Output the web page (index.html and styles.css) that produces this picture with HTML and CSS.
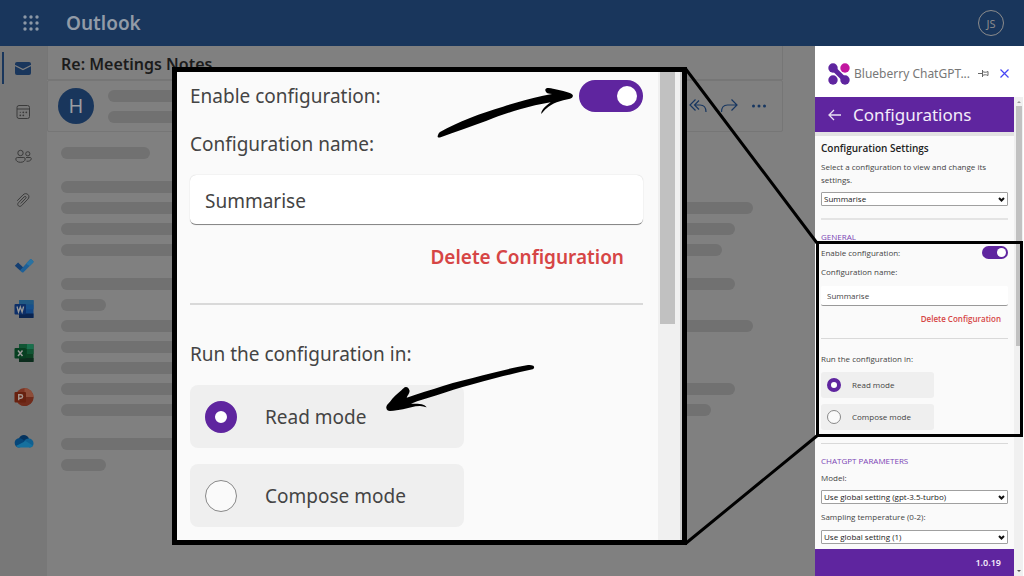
FILE: index.html
```html
<!DOCTYPE html>
<html lang="en">
<head>
<meta charset="utf-8">
<meta name="viewport" content="width=device-width, initial-scale=1">
<title>Outlook – Blueberry ChatGPT configurations</title>
<link rel="stylesheet" href="styles.css">
</head>
<body>
<div class="stage">
  <header class="topbar">
    <button class="icon-button" type="button" aria-label="App launcher">
      <svg width="18" height="18" viewBox="0 0 18 18" fill="#8d98a6"><circle cx="3" cy="3" r="1.7"/><circle cx="9" cy="3" r="1.7"/><circle cx="15" cy="3" r="1.7"/><circle cx="3" cy="9" r="1.7"/><circle cx="9" cy="9" r="1.7"/><circle cx="15" cy="9" r="1.7"/><circle cx="3" cy="15" r="1.7"/><circle cx="9" cy="15" r="1.7"/><circle cx="15" cy="15" r="1.7"/></svg>
    </button>
    <span class="brand">Outlook</span>
    <button class="account" type="button" aria-label="Account">JS</button>
  </header>

  <div class="workspace">
    <nav class="rail" aria-label="Apps">
      <a class="rail-item active" href="#" aria-label="Mail">
        <svg width="20" height="20" viewBox="0 0 20 20"><rect x="2" y="4" width="16" height="13" rx="2" fill="#19365c"/><path d="M2 7.500l8 4 8-4" fill="none" stroke="#808080" stroke-width="1.300"/></svg>
      </a>
      <a class="rail-item" href="#" aria-label="Calendar">
        <svg width="20" height="20" viewBox="0 0 20 20" fill="none" stroke="#3b3b3b" stroke-width="1"><rect x="4" y="3.500" width="12.500" height="13" rx="2"/><path d="M4 7h12.500"/><g fill="#3b3b3b" stroke="none"><circle cx="10.300" cy="10.300" r=".9"/><circle cx="13.300" cy="10.300" r=".9"/><circle cx="7.300" cy="13.300" r=".9"/><circle cx="10.300" cy="13.300" r=".9"/><circle cx="7.300" cy="10.300" r=".6"/></g></svg>
      </a>
      <a class="rail-item" href="#" aria-label="People">
        <svg width="20" height="20" viewBox="0 0 20 20" fill="none" stroke="#3b3b3b" stroke-width="1"><circle cx="7.500" cy="7" r="2.700"/><circle cx="14.800" cy="7.800" r="2.100"/><path d="M4.300 11.500h6.500c.8 0 1.400.6 1.400 1.400 0 2-1.900 3.400-4.700 3.400s-4.700-1.400-4.700-3.400c0-.8.700-1.400 1.500-1.400zM13 11.500h4c.8 0 1.400.5 1.300 1.300-.2 1.700-2.200 2.800-4.800 2.400"/></svg>
      </a>
      <a class="rail-item" href="#" aria-label="Files">
        <svg width="20" height="20" viewBox="0 0 20 20" fill="none" stroke="#3b3b3b" stroke-width="1" stroke-linecap="round"><path d="M4.500 10.500l5.500-5.600c1.700-1.700 3.500-1.500 4.800-.5 1.600 1.400 1.400 3.400 0 4.800l-6.200 6.400c-1 1-2.300 1-3.200.2s-.9-2.100 0-3l5.800-6c.5-.5 1.100-.5 1.600-.1s.4 1.100 0 1.500L8 13.200"/></svg>
      </a>
      <a class="rail-item app todo" href="#" aria-label="To Do">
        <svg width="20" height="20" viewBox="0 0 20 20"><path d="M.8 10.700l3.300-3.300 5.200 5.200-3 3.200z" fill="#133e72"/><path d="M5.900 15.400L16 4.400c.5-.5 1-.5 1.500 0l1.700 1.700c.5.500.5 1 0 1.500L9.500 17.200c-.5.500-1.100.5-1.600 0z" fill="#1e6097"/><path d="M12 8.800l4-4.400c.5-.5 1-.5 1.500 0l1.700 1.700c.5.500.5 1 0 1.500l-3.500 3.500z" fill="#2a73a2"/></svg>
      </a>
      <a class="rail-item app" href="#" aria-label="Word">
        <svg width="20" height="20" viewBox="0 0 20 20"><rect x="5" y="1" width="14.500" height="18" rx="1" fill="#134785"/><path d="M5 1h14.500v4.800H5z" fill="#205983"/><path d="M5 5.800h14.500v4.500H5z" fill="#15508c"/><path d="M5 14.500h14.500V19H5z" fill="#0a2450"/><rect x=".5" y="5" width="11.500" height="10.500" rx="1" fill="#0d2f68"/><path d="M3 7.500l1.500 5.500 1.800-5 1.800 5 1.500-5.500" fill="none" stroke="#999" stroke-width="1.300"/></svg>
      </a>
      <a class="rail-item app" href="#" aria-label="Excel">
        <svg width="20" height="20" viewBox="0 0 20 20"><rect x="5" y="1" width="14.500" height="18" rx="1" fill="#0b4122"/><path d="M5 1h8v5H5zM13 6h6.500v5H13z" fill="#115534"/><path d="M13 1h6.500v5H13z" fill="#1a704d"/><path d="M5 15h14.500v4H5z" fill="#0c2c1d"/><rect x=".5" y="5" width="11.500" height="10.500" rx="1" fill="#073f21"/><path d="M4 7.500l4.500 5.500M8.500 7.500L4 13" stroke="#999" stroke-width="1.500"/></svg>
      </a>
      <a class="rail-item app" href="#" aria-label="PowerPoint">
        <svg width="20" height="20" viewBox="0 0 20 20"><circle cx="10.500" cy="10" r="9" fill="#7d3423"/><path d="M10.500 1a9 9 0 0 1 9 9h-9z" fill="#8d4d39"/><path d="M4.500 16.700a9 9 0 0 0 15-6.700h-9z" fill="#702b1b"/><rect x=".5" y="5" width="11.500" height="10.500" rx="1" fill="#68210f"/><path d="M4.700 13.300V7.700h2.100c2.400 0 2.400 3.500 0 3.500H4.700" fill="none" stroke="#a4968f" stroke-width="1.400"/></svg>
      </a>
      <a class="rail-item app" href="#" aria-label="OneDrive">
        <svg width="20" height="20" viewBox="0 0 20 20"><path d="M4.800 8C6 3.200 13 2.500 15 7.700L9 13z" fill="#04335f"/><path d="M.7 12c0-5 5.700-6 8.300-3.200l6 4.700-10 3C2.500 16.500.7 14.500.7 12z" fill="#064679"/><path d="M9.800 10.500c2.200-4.300 9.500-4 9.700 2 0 2.500-1.700 4-4 4z" fill="#106091"/><path d="M2 15l9.500-5 7.500 4.500c-.8 1.300-2 2-3.700 2H5c-1.200 0-2.300-.7-3-1.500z" fill="#15709e"/></svg>
      </a>
    </nav>

    <main class="mail">
      <h1 class="subject">Re: Meetings Notes</h1>
      <section class="message-head">
        <span class="avatar">H</span>
        <div class="sender">
          <span class="bar bar-sender"></span>
          <span class="bar bar-sender"></span>
        </div>
        <div class="actions">
          <button class="icon-button" type="button" aria-label="Reply all"><svg width="18" height="16" viewBox="0 0 18 16" fill="none" stroke="#173660" stroke-width="1.200"><path d="M6.500 1.500L1 7l5.500 5.500M10 2.500L5.500 7l4.500 4.500M5.500 7H11c4 0 6 2.500 6 7"/></svg></button>
          <button class="icon-button" type="button" aria-label="Forward"><svg width="18" height="16" viewBox="0 0 18 16" fill="none" stroke="#173660" stroke-width="1.200"><path d="M11.500 1.500L17 7l-5.500 5.500M17 7H7.500C3.500 7 1.500 9.500 1.500 14"/></svg></button>
          <button class="icon-button" type="button" aria-label="More actions"><svg width="16" height="16" viewBox="0 0 16 16" fill="#173660"><circle cx="2.500" cy="8" r="1.500"/><circle cx="8" cy="8" r="1.500"/><circle cx="13.500" cy="8" r="1.500"/></svg></button>
        </div>
      </section>
      <section class="message-body">
        <div class="lines"><span class="bar bar-greeting"></span></div>
        <div class="lines">
          <span class="bar bar-short"></span><span class="bar bar-full"></span><span class="bar bar-long"></span><span class="bar bar-mid"></span>
        </div>
        <div class="lines">
          <span class="bar bar-long"></span><span class="bar bar-stub"></span><span class="bar bar-full"></span><span class="bar bar-short"></span><span class="bar bar-short"></span><span class="bar bar-long"></span><span class="bar bar-end"></span>
        </div>
        <div class="lines"><span class="bar bar-short"></span><span class="bar bar-stub"></span></div>
      </section>
    </main>

    <aside class="pane">
      <header class="pane-head">
        <svg class="logo" width="22" height="22" viewBox="0 0 22 22"><path d="M5 5l12 12" stroke="#5f259f" stroke-width="5"/><circle cx="5" cy="5" r="4.700" fill="#5f259f"/><circle cx="17" cy="5" r="4.700" fill="#c217a0"/><circle cx="5" cy="17" r="4.700" fill="#5f259f"/><circle cx="17" cy="17" r="4.700" fill="#5f259f"/></svg>
        <span class="pane-title">Blueberry ChatGPT...</span>
        <button class="icon-button" type="button" aria-label="Unpin"><svg width="11" height="9" viewBox="0 0 11 9" fill="none" stroke="#666" stroke-width="1"><path d="M0 4.500h4M4.500 1v7M4.500 2.500c2 1 3.500 1 5.500 0v4c-2-1-3.500-1-5.500 0"/></svg></button>
        <button class="icon-button" type="button" aria-label="Close"><svg width="9" height="9" viewBox="0 0 9 9" stroke="#4646f5" stroke-width="1.200"><path d="M.5.5l8 8M8.500.5l-8 8"/></svg></button>
      </header>
      <div class="pane-view">
        <div class="pane-main">
          <div class="pane-bar">
            <button class="icon-button" type="button" aria-label="Back"><svg width="13" height="12" viewBox="0 0 13 12" fill="none" stroke="#e9dff3" stroke-width="1.300"><path d="M6 1L1 6l5 5M1 6h12"/></svg></button>
            <h2>Configurations</h2>
          </div>
          <form class="settings">
            <h3>Configuration Settings</h3>
            <p>Select a configuration to view and change its settings.</p>
            <span class="select"><select aria-label="Configuration"><option>Summarise</option></select><svg width="7" height="5" viewBox="0 0 7 5"><path d="M1 1l2.500 2.500L6 1"/></svg></span>
            <hr class="rule rule-top">
            <h4>GENERAL</h4>
            <div class="switch-row"><label for="enable">Enable configuration:</label><input class="switch" id="enable" type="checkbox" role="switch" checked></div>
            <label class="name-label" for="name">Configuration name:</label>
            <input class="text-field" id="name" type="text" value="Summarise">
            <button class="delete" type="button">Delete Configuration</button>
            <hr class="rule">
            <fieldset class="modes">
              <legend>Run the configuration in:</legend>
              <label class="mode"><input type="radio" name="mode" checked>Read mode</label>
              <label class="mode"><input type="radio" name="mode">Compose mode</label>
            </fieldset>
            <hr class="rule">
            <h4>CHATGPT PARAMETERS</h4>
            <label class="param" for="model">Model:</label>
            <span class="select"><select id="model"><option>Use global setting (gpt-3.5-turbo)</option></select><svg width="7" height="5" viewBox="0 0 7 5"><path d="M1 1l2.500 2.500L6 1"/></svg></span>
            <label class="param" for="temp">Sampling temperature (0-2):</label>
            <span class="select"><select id="temp"><option>Use global setting (1)</option></select><svg width="7" height="5" viewBox="0 0 7 5"><path d="M1 1l2.500 2.500L6 1"/></svg></span>
          </form>
          <footer class="pane-foot">1.0.19</footer>
        </div>
        <div class="scroll" aria-hidden="true">
          <svg width="6" height="4" viewBox="0 0 6 4"><path d="M1 3l2-2 2 2z" fill="#999"/></svg>
          <span class="thumb"></span>
          <svg class="down" width="6" height="4" viewBox="0 0 6 4"><path d="M1 1l2 2 2-2z" fill="#555"/></svg>
        </div>
      </div>
    </aside>
  </div>

  <div class="highlight"></div>
  <svg class="overlay" width="1024" height="576" viewBox="0 0 1024 576" fill="none" stroke="#000" stroke-width="3"><path d="M685 68L817 243M685 544L818 435"/></svg>

  <section class="lens" aria-label="Enlarged settings">
    <form class="settings lens-form">
      <div class="switch-row"><label for="lens-enable">Enable configuration:</label><input class="switch" id="lens-enable" type="checkbox" role="switch" checked></div>
      <label class="name-label" for="lens-name">Configuration name:</label>
      <input class="text-field" id="lens-name" type="text" value="Summarise">
      <button class="delete" type="button">Delete Configuration</button>
      <hr class="rule">
      <fieldset class="modes">
        <legend>Run the configuration in:</legend>
        <label class="mode"><input type="radio" name="lens-mode" checked>Read mode</label>
        <label class="mode"><input type="radio" name="lens-mode">Compose mode</label>
      </fieldset>
    </form>
    <div class="lens-scroll" aria-hidden="true"><span></span></div>
  </section>

  <svg class="overlay" width="1024" height="576" viewBox="0 0 1024 576" fill="#000">
    <path d="M440 132C449 127 459 122 470 118C481 113.500 492 110 503 106.700C516 102.500 530 98.500 543 95.700L552 94C549 93.500 547.500 93.500 546.700 92.700C544.500 91 545 88 547.500 88C549.500 87.700 551.500 88.300 553 88.700C558 89.500 562 90.700 566.700 92C570 93 572.700 94 572.900 95.500C573 97 571.500 98.300 570 98.700C565.500 99.700 561 100.500 556.700 102.300C552.500 104 549.500 106 546.700 108.300C544.500 110 543 112 541.700 113.700C541 113.500 541.200 112 542 110.700C543.500 108 546 106 548.300 104L550.700 102.300C540 104 530 106.500 520 109.300C509 112.500 497 116.500 486.700 120.700C471 126.500 455 132 440.700 137.300C438.500 138 437.300 137.500 437.700 136C438 134.500 438.800 133 440 132z"/>
    <path d="M533.300 365.700C531 364.900 529 365 526.700 365.300C512 368 497 371.500 483 375.300C469 379 456 382 443 386C431 390 418 393.500 406.700 397.700C407.500 395 410.500 392.500 409.300 390C408.700 388 407.500 387 406 387C404 387 403 389 401.700 390C397.500 393.500 393 397.500 390 401.700C388 404 386 405.500 386.300 407.700C386.500 410 388 411 390 411C394.500 410.800 399 410.200 403 409.300C408.500 408 414 406 420 406C422.500 406 424.500 407.200 426.700 407.300C425.500 405.600 423.500 404.800 421.700 404.300C419 403.700 416 403.700 413.300 403.700L411 403.700C419 400.500 428 398 436.700 395.300C448 391.500 459 388 470 385C479 382.500 488 380 496.700 377.700C508 375 520 372 532.700 369.300C534.500 368.500 534.500 366.500 533.300 365.700z"/>
  </svg>
</div>
</body>
</html>
```

FILE: styles.css
```css
* { box-sizing: border-box; }

body {
  margin: 0;
  font-family: "Noto Sans", "Open Sans", sans-serif;
  color: #444;
}

h1, h2, h3, h4, p, hr, fieldset, legend { margin: 0; padding: 0; border: 0; }

button, input, select { font: inherit; color: inherit; margin: 0; }

svg { display: block; }

.stage {
  position: relative;
  display: flex;
  flex-direction: column;
  min-height: 100vh;
  overflow: hidden;
  background: #808080;
}

.icon-button { border: 0; padding: 0; background: none; }

/* Top bar */
.topbar {
  display: flex;
  align-items: center;
  height: 46px;
  padding: 0 20px 0 22px;
  background: #19365c;
  color: #929ba7;
}

.brand { flex: 1; margin-left: 26px; font-size: 19px; font-weight: 600; }

.account {
  width: 26px;
  height: 26px;
  padding: 0;
  border: 1px solid #8c8c8c;
  border-radius: 50%;
  background: none;
  color: #8c8c8c;
  font-size: 11px;
}

.workspace { display: flex; flex: 1; }

/* App rail */
.rail {
  display: flex;
  flex-direction: column;
  width: 47px;
  padding-top: 6px;
  background: #787878;
}

.rail-item {
  display: flex;
  align-items: center;
  justify-content: center;
  height: 32px;
  margin-bottom: 12px;
  margin-left: 2px;
  padding-right: 5px;
  border-left: 2px solid transparent;
}

.rail-item.active { border-color: #19365c; }
.rail-item.app { padding-right: 4px; }
.rail-item.todo { margin-top: 21px; }

/* Reading area */
.mail { flex: 1; min-width: 0; padding-right: 32px; }

.subject {
  height: 34px;
  padding-left: 13px;
  border: 1px solid #767676;
  border-top: 0;
  font-size: 16px;
  line-height: 36px;
  font-weight: 600;
  color: #1b1b1b;
}

.message-head {
  display: flex;
  align-items: center;
  gap: 14px;
  height: 52px;
  padding: 0 15px 0 10px;
  border: 1px solid #767676;
  border-radius: 2px;
}

.avatar {
  width: 36px;
  height: 36px;
  border-radius: 50%;
  background: #19365c;
  color: #9a9da1;
  font-size: 20px;
  line-height: 36px;
  text-align: center;
}

.sender { display: flex; flex-direction: column; gap: 9px; flex: 1; }
.actions { display: flex; gap: 13px; }

.bar { height: 12px; max-width: 100%; border-radius: 6px; background: #717171; }

.message-body { display: flex; flex-direction: column; gap: 22px; padding: 15px 0 0 14px; }
.lines { display: flex; flex-direction: column; gap: 9px; }

.bar-sender { width: 320px; }
.bar-greeting { width: 89px; }
.bar-stub { width: 45px; }
.bar-short { width: 600px; }
.bar-end { width: 650px; }
.bar-mid { width: 661px; }
.bar-long { width: 674px; }
.bar-full { width: 692px; }

/* Add-in pane */
.pane { display: flex; flex-direction: column; width: 209px; background: #fff; }

.pane-head {
  display: flex;
  align-items: center;
  gap: 4px;
  height: 51px;
  padding: 4px 15px 0 13px;
}

.pane-title { flex: 1; font-size: 12px; color: #777; white-space: nowrap; }
.pane-head .icon-button:last-child { margin-left: 7px; }

.pane-view { display: flex; flex: 1; }
.pane-main { display: flex; flex-direction: column; flex: 1; min-width: 0; background: #fafafa; }

.pane-bar {
  display: flex;
  align-items: center;
  gap: 12px;
  height: 39px;
  padding: 0 13px;
  border-bottom: 4px solid #e2e2e2;
  background: #5f259f;
  background-clip: padding-box;
  color: #f3ecfa;
}

.pane-bar h2 { font-size: 17px; font-weight: 400; }

.scroll {
  display: flex;
  flex-direction: column;
  align-items: center;
  width: 10px;
  padding: 3px 0;
  border-right: 1px solid #fff;
  background: #f0f0f0;
}

.thumb { width: 6px; height: 240px; margin-top: 2px; background: #c1c1c1; }
.down { margin-top: auto; }

/* Settings form, shared by the pane and the lens */
.settings {
  display: flex;
  flex-direction: column;
  flex: 1;
  padding: 5px 6px;
  font-family: "Open Sans", "Noto Sans", sans-serif;
  font-size: 8px;
  line-height: 12px;
}

.settings h3 { font-size: 10px; line-height: 14px; font-weight: 600; color: #222; }
.settings p { margin: 5px 0 6px; line-height: 13px; }
.settings h4 { margin-top: 11px; font-size: 8px; font-weight: 400; color: #7a45b5; }

.select { position: relative; display: block; }

.select select {
  display: block;
  width: 100%;
  height: 14px;
  padding: 0 2px;
  border: 1px solid #a0a0a0;
  border-radius: 1px;
  background: #fff;
  appearance: none;
  line-height: 12px;
  color: #222;
}

.select svg { position: absolute; right: 3px; top: 5px; fill: none; stroke: #111; stroke-width: 2; }

.rule { height: 1px; margin-top: 13px; background: #d9d9d9; }
.rule-top { height: 2px; margin-top: 12px; background: #e4e4e4; }

.switch-row { display: flex; align-items: center; justify-content: space-between; margin-top: 3px; }

.switch {
  width: 26px;
  height: 13px;
  padding: 2px;
  border-radius: 16px;
  background: #5f259f;
  appearance: none;
}

.switch::before {
  content: "";
  display: block;
  width: 9px;
  height: 9px;
  margin-left: auto;
  border-radius: 50%;
  background: #fff;
}

.name-label { margin-top: 7px; }

.text-field {
  height: 20px;
  margin-top: 8px;
  padding: 0 6px;
  border: 0;
  border-bottom: 1px solid #999;
  border-radius: 2px;
  background: #fff;
}

.delete {
  align-self: flex-end;
  margin-top: 7px;
  padding: 0 7px;
  border: 0;
  background: none;
  font-weight: 600;
  color: #d64545;
}

.modes { display: flex; flex-direction: column; gap: 6px; min-width: 0; margin-top: 14px; }
.modes legend { margin-bottom: 7px; }

.mode {
  display: flex;
  align-items: center;
  gap: 11px;
  width: 113px;
  height: 26px;
  padding: 0 6px;
  border-radius: 3px;
  background: #efefef;
}

.mode input {
  width: 14px;
  height: 14px;
  border: 1px solid #888;
  border-radius: 50%;
  background: #fafafa;
  appearance: none;
}

.mode input:checked { border: 4px solid #5f259f; background: #fff; }

.param { margin: 5px 0 6px; }
.select + .param { margin: 7px 0; }

.pane-foot {
  height: 27px;
  padding-right: 13px;
  background: #5f259f;
  color: #f3ecfa;
  font-size: 9px;
  line-height: 28px;
  font-weight: 600;
  text-align: right;
}

/* Callout frame, lens and drawn arrows lie over the page */
.highlight {
  position: absolute;
  left: 816px;
  top: 241px;
  width: 207px;
  height: 196px;
  border: 3px solid #000;
}

.overlay { position: absolute; left: 0; top: 0; pointer-events: none; }

.lens {
  position: absolute;
  left: 172px;
  top: 67px;
  display: flex;
  width: 515px;
  border: 5px solid #000;
  background: #fafafa;
}

.lens-form {
  padding: 8px 15px 13px 13px;
  font-family: "Noto Sans", "Open Sans", sans-serif;
  font-size: 19px;
  line-height: 24px;
}

.lens .switch-row { margin-top: 0; }
.lens .switch { width: 64px; height: 32px; padding: 6px; }
.lens .switch::before { width: 20px; height: 20px; }
.lens .name-label { margin-top: 20px; }
.lens .text-field { height: 50px; margin-top: 19px; padding: 2px 15px 0; border-bottom-color: #888; border-radius: 6px; box-shadow: 0 0 1px #bbb; }
.lens .delete { margin-top: 20px; padding: 0 19px; font-weight: 600; }
.lens .rule { height: 2px; margin-top: 34px; }
.lens .modes { gap: 16px; margin-top: 37px; }
.lens .modes legend { margin-bottom: 19px; }
.lens .mode { gap: 28px; width: 274px; height: 63px; padding: 0 15px; border-radius: 8px; }
.lens .mode input { width: 32px; height: 32px; }
.lens .mode input:checked { border-width: 10px; }

.lens-scroll { width: 24px; padding: 0 5px 0 2px; border-right: 2px solid #ccc; background: #f0f0f0; }
.lens-scroll span { display: block; height: 252px; background: #c1c1c1; }
```
